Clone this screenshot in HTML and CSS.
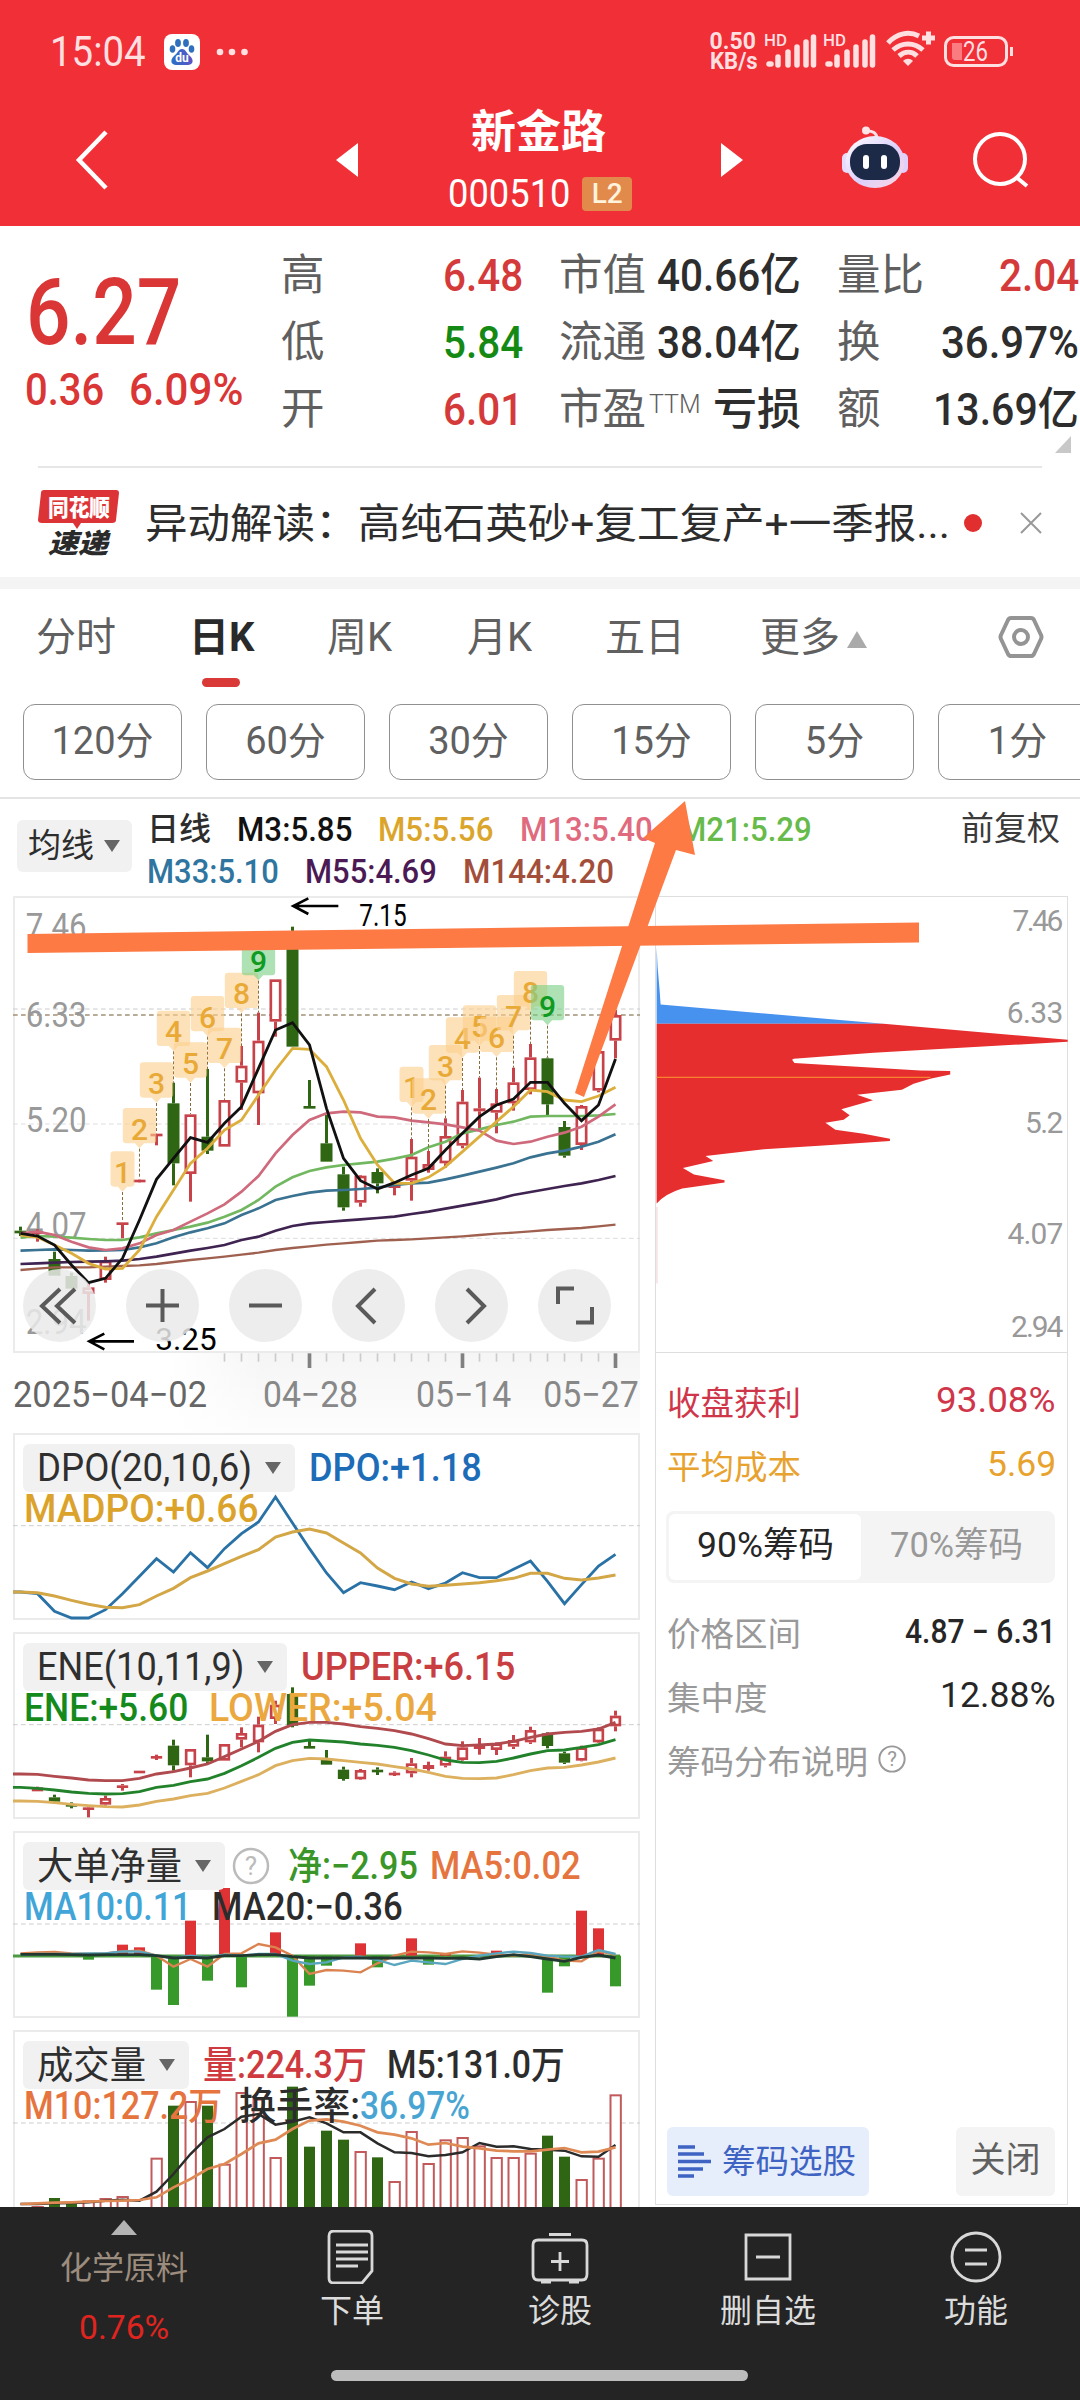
FILE: index.html
```html
<!DOCTYPE html>
<html lang="zh-CN">
<head>
<meta charset="utf-8">
<title>新金路 000510</title>
<link rel="stylesheet" href="styles.css">
</head>
<body>
<header class="top">
  <div class="status">
    <span class="fit clock" data-w="96">15:04</span>
    <svg class="baidu" width="36" height="36" viewBox="0 0 36 36"><defs><linearGradient id="paw" x1="0" x2="1"><stop offset="0" stop-color="#2b6fc4"/><stop offset="1" stop-color="#5a55c8"/></linearGradient></defs><rect width="36" height="36" rx="8" fill="#fff"/><g fill="#2f6fbe"><ellipse cx="8.500" cy="15" rx="2.800" ry="3.800"/><ellipse cx="14" cy="9" rx="2.900" ry="3.900"/><ellipse cx="22" cy="9" rx="2.900" ry="3.900"/><ellipse cx="27.500" cy="15" rx="2.800" ry="3.800"/></g><path d="M18 15c4 0 4 4 8 7 5 5 2 9-2 9H12c-4 0-7-4-2-9 4-3 4-7 8-7z" fill="url(#paw)"/><text x="18" y="28" text-anchor="middle" class="du">du</text></svg>
    <svg width="34" height="10" viewBox="0 0 34 10" fill="#ffdfe0"><circle cx="5" cy="5" r="3.300"/><circle cx="17" cy="5" r="3.300"/><circle cx="29.500" cy="5" r="3.300"/></svg>
    <div class="speed"><span class="fit" data-w="46">0.50</span><span class="fit" data-w="48">KB/s</span></div>
    <svg width="51" height="36" viewBox="0 0 51 36" class="signal"><text x="0" y="12" textLength="23" lengthAdjust="spacingAndGlyphs">HD</text><path d="M5 30h2M14 31v-8M24 31V18M33 31V13M42 31V8M49.500 31V3"/></svg>
    <svg width="51" height="36" viewBox="0 0 51 36" class="signal"><text x="0" y="12" textLength="23" lengthAdjust="spacingAndGlyphs">HD</text><path d="M5 30h2M14 31v-8M24 31V18M33 31V13M42 31V8M49.500 31V3"/></svg>
    <svg class="wifi" width="52" height="38" viewBox="0 0 52 38" fill="none" stroke="#ffdfe0" stroke-width="5"><path d="M3 13c9-10 21-12 31-7M8 20c9-8 21-8 30 0M14 26c6-5 13-5 18 0"/><path d="M18 31c3-3 7-3 10 0l-5 5z" fill="#ffdfe0" stroke="none"/><path d="M37 8h13M43.500 1.500v13"/></svg>
    <svg width="70" height="32" viewBox="0 0 70 32"><rect x="1.500" y="1.500" width="61" height="28" rx="8" fill="none" stroke="#ffdfe0" stroke-width="3"/><path d="M66 11h3v9h-3z" fill="#ffdfe0"/><path d="M8 7h10v17H11q-3 0-3-3z" fill="#fa7c80"/><text x="19" y="25" class="batt" textLength="25" lengthAdjust="spacingAndGlyphs">26</text></svg>
  </div>
  <nav class="titlebar">
    <svg class="back" width="36" height="64" viewBox="0 0 36 64"><path d="M33 4L6 32l27 28" fill="none" stroke="#fff" stroke-width="4.500"/></svg>
    <svg class="prev" width="24" height="36" viewBox="0 0 24 36"><path d="M23 1v34L1 18z" fill="#fff"/></svg>
    <div class="name"><h1>新金路</h1><div class="code"><span class="fit" data-w="123">000510</span><b>L2</b></div></div>
    <svg class="next" width="24" height="36" viewBox="0 0 24 36"><path d="M1 1v34l22-17z" fill="#fff"/></svg>
    <svg class="robot" width="68" height="64" viewBox="0 0 68 64"><defs><linearGradient id="bot" x1="0" y1="0" x2="1" y2="1"><stop offset="0" stop-color="#fff"/><stop offset=".55" stop-color="#dcd0fb"/><stop offset="1" stop-color="#ffd6e0"/></linearGradient></defs><path d="M24 5q12-1 12 8" fill="none" stroke="#ffdfe4" stroke-width="3"/><circle cx="25" cy="4.500" r="4" fill="#ffe4e8"/><rect x="1" y="27" width="10" height="20" rx="5" fill="#e6dcfb"/><rect x="57" y="27" width="10" height="20" rx="5" fill="#ddd0fb"/><ellipse cx="34" cy="36" rx="29.500" ry="26" fill="url(#bot)"/><rect x="9" y="18" width="50" height="36" rx="17" fill="#1c2947"/><rect x="22" y="29" width="6" height="14" rx="3" fill="#fff"/><rect x="40" y="29" width="6" height="14" rx="3" fill="#fff"/></svg>
    <svg class="find" width="58" height="58" viewBox="0 0 58 58" fill="none" stroke="#fff" stroke-width="4"><circle cx="28" cy="28" r="25"/><path d="M44 46l11 9"/></svg>
  </nav>
</header>

<section class="quote">
  <div class="price"><span class="fit last" data-w="155">6.27</span><div class="chg"><span class="fit" data-w="79">0.36</span><span class="fit" data-w="114">6.09%</span></div></div>
  <dl class="c1"><dt>高</dt><dd class="red"><span class="fit" data-w="80">6.48</span></dd><dt>低</dt><dd class="green"><span class="fit" data-w="80">5.84</span></dd><dt>开</dt><dd class="red"><span class="fit" data-w="80">6.01</span></dd></dl>
  <dl class="c2"><dt>市值</dt><dd><span class="fit" data-w="144">40.66亿</span></dd><dt>流通</dt><dd><span class="fit" data-w="144">38.04亿</span></dd><dt>市盈<sup>TTM</sup></dt><dd>亏损</dd></dl>
  <dl class="c3"><dt>量比</dt><dd class="red"><span class="fit" data-w="80">2.04</span></dd><dt>换</dt><dd><span class="fit" data-w="138">36.97%</span></dd><dt>额</dt><dd><span class="fit" data-w="146">13.69亿</span></dd></dl>
  <i class="corner"></i>
</section>

<section class="news">
  <svg width="82" height="70" viewBox="0 0 82 70"><path d="M6 2h72q3 0 3 3l-3 27q0 3-4 3H43l-4 6-4-6H4q-4 0-4-3L3 5q0-3 3-3z" fill="#dc3436"/><text x="10" y="28" class="lg1" textLength="62" lengthAdjust="spacingAndGlyphs">同花顺</text><text x="10" y="65" class="lg2" textLength="60" lengthAdjust="spacingAndGlyphs">速递</text></svg>
  <p><span class="fit" data-w="805">异动解读：高纯石英砂+复工复产+一季报...</span></p><i class="dot"></i>
  <svg class="close" width="24" height="24" viewBox="0 0 24 24"><path d="M2 2l20 20M22 2L2 22" stroke="#999" stroke-width="2"/></svg>
</section>

<nav class="tabs"><span>分时</span><span class="on">日K</span><span>周K</span><span>月K</span><span>五日</span><span>更多<i></i></span>
<svg width="46" height="46" viewBox="0 0 46 46" fill="none" stroke="#949494" stroke-width="4"><path d="M13 4h20q2 0 3 2l7 15q1 2 0 4l-7 15q-1 2-3 2H13q-2 0-3-2L3 25q-1-2 0-4l7-15q1-2 3-2z"/><circle cx="23" cy="23" r="7"/></svg></nav>
<div class="periods"><span>120分</span><span>60分</span><span>30分</span><span>15分</span><span>5分</span><span>1分</span></div>

<section class="legend">
  <span class="pill">均线<i class="tri"></i></span>
  <div class="ma">
    <p><span class="k">日线</span><span class="fit" data-w="115" style="color:#111">M3:5.85</span><span class="fit" data-w="115" style="color:#dba52c">M5:5.56</span><span class="fit" data-w="133" style="color:#e06a7e">M13:5.40</span><span class="fit" data-w="133" style="color:#66bb4a">M21:5.29</span></p>
    <p><span class="fit" data-w="132" style="color:#2f759f">M33:5.10</span><span class="fit" data-w="132" style="color:#4b1a55">M55:4.69</span><span class="fit" data-w="151" style="color:#a24e3b">M144:4.20</span></p>
  </div>
  <span class="adj">前复权</span>
</section>

<main class="board">
  <div class="left">
    <div class="kline">
      <svg id="kchart" width="627" height="457" viewBox="39 18 1881 1371"></svg>
      <div class="tools">
        <svg viewBox="0 0 73 73"><path d="M37 20L19 37l18 17M52 20L34 37l18 17"/></svg>
        <svg viewBox="0 0 73 73"><path d="M20 36.500h33M36.500 20v33"/></svg>
        <svg viewBox="0 0 73 73"><path d="M20 36.500h33"/></svg>
        <svg viewBox="0 0 73 73"><path d="M43 20L26 37l17 17"/></svg>
        <svg viewBox="0 0 73 73"><path d="M32 20l17 17-17 17"/></svg>
        <svg viewBox="0 0 73 73"><path d="M20 35V19.500h16M54 38v15.500H38"/></svg>
      </div>
    </div>
    <svg id="axis" class="axis" width="627" height="80" viewBox="39 1389 1881 240"></svg>
    <div class="panel"><svg id="dpo" width="627" height="187" viewBox="39 38 1881 561"></svg>
      <div class="cap"><p><span class="pill"><span class="fit" data-w="215">DPO(20,10,6)</span><i class="tri"></i></span><span class="fit" data-w="173" style="color:#1d6cb8">DPO:+1.18</span></p>
      <p class="r2"><span class="fit" data-w="234" style="color:#dba32b">MADPO:+0.66</span></p></div></div>
    <div class="panel"><svg id="ene" width="627" height="187" viewBox="39 634 1881 561"></svg>
      <div class="cap"><p><span class="pill"><span class="fit" data-w="207">ENE(10,11,9)</span><i class="tri"></i></span><span class="fit" data-w="214" style="color:#c93f41">UPPER:+6.15</span></p>
      <p class="r2"><span class="fit" data-w="164" style="color:#158a1c">ENE:+5.60</span><span class="fit gap21" data-w="228" style="color:#eba83f">LOWER:+5.04</span></p></div></div>
    <div class="panel"><svg id="net" width="627" height="187" viewBox="39 31 1881 561"></svg>
      <div class="cap"><p><span class="pill"><span class="fit" data-w="145">大单净量</span><i class="tri"></i></span><svg class="q big" width="38" height="38" viewBox="0 0 38 38"><circle cx="19" cy="19" r="17"/><text x="19" y="28">?</text></svg><span class="fit gapq" data-w="130" style="color:#3b962a">净:−2.95</span><span class="fit gap12" data-w="151" style="color:#e5743f">MA5:0.02</span></p>
      <p class="r2"><span class="fit" data-w="167" style="color:#41a5d8">MA10:0.11</span><span class="fit gap21" data-w="191" style="color:#2c2c2c">MA20:−0.36</span></p></div></div>
    <div class="panel"><svg id="vol" width="627" height="187" viewBox="39 628 1881 561"></svg>
      <div class="cap"><p><span class="pill"><span class="fit" data-w="109">成交量</span><i class="tri"></i></span><span class="fit" data-w="164" style="color:#cf3a40">量:224.3万</span><span class="fit gap20" data-w="178" style="color:#2c2c2c">M5:131.0万</span></p>
      <p class="r2"><span class="fit" data-w="198" style="color:#e5743f">M10:127.2万</span><span class="fit gap17" data-w="121" style="color:#2c2c2c">换手率:</span><span class="fit" data-w="110" style="color:#48a4d2">36.97%</span></p></div></div>
  </div>
  <aside class="chips">
    <svg class="dist" width="412" height="457" viewBox="47 16 1236 1370">
      <path d="M48 170L51 230 57 300 60 342 730 400H48z" fill="#4791ef"/>
      <path d="M48 400H730L1283 448V454L700 487 460 505 455 508 462 518 840 540 930 542V552L870 565 820 580 785 598 650 613 698 630 603 657 628 675 610 688 555 697 585 718 670 730 749 745V752L560 765 370 777 195 797 218 812 127 833 160 853 252 870V877L125 895Q75 910 48 940z" fill="#e72e2f"/>
      <path d="M48 561H870" stroke="#f5822e" stroke-width="4"/><path d="M49 950V1180" stroke="#f0b8c0" stroke-width="2"/>
      <g class="yr"><text x="1117" y="120" textLength="153">7.46</text><text x="1100" y="397" textLength="170">6.33</text><text x="1155" y="729" textLength="115">5.2</text><text x="1102" y="1061" textLength="168">4.07</text><text x="1113" y="1340" textLength="157">2.94</text></g>
    </svg>
    <div class="info">
      <p class="win"><span>收盘获利</span><span class="fit" data-w="120">93.08%</span></p>
      <p class="cost"><span>平均成本</span><span class="fit" data-w="69">5.69</span></p>
      <div class="seg"><b><span class="fit" data-w="137">90%筹码</span></b><span><span class="fit" data-w="133">70%筹码</span></span></div>
      <p><span>价格区间</span><span class="fit v sm" data-w="151">4.87 − 6.31</span></p>
      <p><span>集中度</span><span class="fit v" data-w="116">12.88%</span></p>
      <p class="note"><span>筹码分布说明</span><svg class="q" width="30" height="30" viewBox="0 0 38 38"><circle cx="19" cy="19" r="16"/><text x="19" y="28">?</text></svg></p>
    </div>
    <div class="acts"><span class="pick"><svg width="34" height="34" viewBox="0 0 34 34" stroke="#3f63c2" stroke-width="3.500"><path d="M0 2h17M0 9h26M0 16.500h33M0 24h25M0 31h16"/></svg>筹码选股</span><span class="shut">关闭</span></div>
  </aside>
  <svg class="marks" width="1080" height="320" viewBox="0 790 1080 320" fill="#fe7a45"><path d="M27.500 934L919 922.500V942.500L27.500 953z"/><path d="M575 1093L655 843 643 838 685 801 695 855 676 850 584 1097z"/></svg>
</main>

<footer class="bottom">
  <div class="items">
    <div class="sector"><i></i><span>化学原料</span><b><span class="fit" data-w="90">0.76%</span></b></div>
    <div><svg viewBox="0 0 54 54"><path d="M9 1h33q5 0 5 5v35l-10 12H9q-5 0-5-5V6q0-5 5-5zM11 15h32M11 22h32M11 29h32M11 36h22"/></svg><span>下单</span></div>
    <div><svg viewBox="0 0 60 54"><path d="M8 10h44q5 0 5 5v29q0 6-5 6H8q-5 0-5-6V15q0-5 5-5zM19 4.500h22M30 22v19M21 31.500h18M11 52h10M39 52h10"/></svg><span>诊股</span></div>
    <div><svg viewBox="0 0 54 54"><path d="M5 5h44v44H5zM15 27h24"/></svg><span>删自选</span></div>
    <div><svg viewBox="0 0 54 54"><circle cx="27" cy="27" r="24"/><path d="M16 20h22M16 34h22"/></svg><span>功能</span></div>
  </div>
  <i class="home"></i>
</footer>
<script src="charts.js"></script>
</body>
</html>
```
FILE: styles.css
```css
* { box-sizing: border-box; margin: 0; padding: 0; }
body { width: 1080px; height: 2400px; overflow: hidden; background: #fff; color: #2d2d2d; font-family: Roboto, "Noto Sans CJK SC", sans-serif; display: flex; flex-direction: column; position: relative; }
svg { display: block; flex: none; }
i { font-style: normal; display: block; flex: none; }
.fit { display: inline-block; white-space: pre; transform-origin: 0 50%; flex: none; }
.red { color: #d53a3b; }
.green { color: #148a14; }

.top { height: 226px; background: #f12f37; color: #fff; flex: none; }
.status { height: 103px; padding: 0 0 0 50px; display: flex; align-items: center; color: #ffdfe0; }
.clock { font-size: 42px; }
.baidu { margin: 0 15px 0 18px; }
.du { font: 700 12px Roboto; fill: #fff; }
.speed { display: flex; flex-direction: column; align-items: flex-start; font: 700 23px/20px Roboto; margin: 0 4px 0 461px; width: 50px; }
.signal { margin-right: 8px; overflow: visible; }
.signal text { font: 500 17px Roboto; fill: #ffdfe0; }
.signal path { stroke: #ffdfe0; stroke-width: 5.500; stroke-linecap: round; }
.wifi { margin: -6px 7px 0 3px; }
.batt { font: 27px Roboto; fill: #ffdfe0; }
.titlebar { height: 123px; display: flex; align-items: center; }
.titlebar > svg { margin-top: -10px; }
.back { margin-left: 73px; }
.prev { margin-left: 226px; }
.name { margin: -4px 99px 0 100px; width: 162px; display: flex; flex-direction: column; align-items: center; flex: none; }
.name h1 { font-size: 45px; line-height: 62px; font-weight: 700; margin-left: -3px; }
.code { display: flex; align-items: center; gap: 12px; font-size: 39px; line-height: 60px; }
.code b { width: 50px; height: 34px; border-radius: 4px; background: #e28a4c; color: #fff3dc; font: 500 28px/34px Roboto; text-align: center; }
.robot { margin-left: 97px; }
.titlebar > .robot { margin-top: -13px; }
.find { margin-left: 63px; }

.quote { height: 242px; display: flex; position: relative; flex: none; }
.quote::after { content: ""; position: absolute; left: 38px; right: 38px; bottom: 0; height: 2px; background: #e6e6e6; }
.price { width: 281px; padding: 34px 0 0 25px; color: #d93635; }
.last { font-size: 93px; line-height: 106px; font-weight: 500; margin-left: 1px; }
.chg { display: flex; gap: 25px; font-size: 45px; line-height: 48px; font-weight: 500; }
dl { display: grid; grid-template-columns: auto 1fr; grid-auto-rows: 67px; padding-top: 17px; line-height: 66px; font-size: 43.500px; align-content: start; }
dt { color: #5f5f5f; white-space: nowrap; }
dd { text-align: right; white-space: nowrap; font-weight: 500; font-size: 45px; }
.c2 dd:last-child { font-size: 44px; }
.c1 { width: 242px; }
.c2 { width: 242px; margin-left: 36px; grid-template-columns: 90px 152px; }
.c3 { width: 242px; margin-left: 36px; }
sup { font-size: 25px; line-height: 0; vertical-align: 11px; margin-left: 3px; font-weight: 300; }
.corner { position: absolute; left: 1055px; top: 210px; border-left: 16px solid transparent; border-bottom: 17px solid #c8c8c8; }

.news { height: 109px; display: flex; align-items: center; padding-left: 38px; flex: none; }
.news p { font-size: 41px; margin: -5px 0 0 25px; width: 806px; overflow: visible; white-space: nowrap; }
.lg1 { font: 900 23px "Noto Sans CJK SC"; fill: #fff; }
.lg2 { font: italic 900 27px "Noto Sans CJK SC"; fill: #2a2a2a; }
.dot { width: 18px; height: 18px; border-radius: 9px; background: #e02f2e; margin-left: 13px; }
.close { margin-left: 37px; }

.tabs { border-top: 12px solid #f4f4f4; height: 112px; display: grid; grid-template-columns: 153px 138px 140px 138px 155px 237px 1fr; padding-left: 36px; line-height: 98px; font-size: 40px; color: #606060; flex: none; }
.tabs .on { color: #2a2a2a; font-weight: 700; position: relative; }
.tabs .on::after { content: ""; position: absolute; left: 13px; bottom: 2px; width: 38px; height: 9px; border-radius: 5px; background: #d93a38; }
.tabs span { height: 100px; }
.tabs span i { display: inline-block; border: 10px solid transparent; border-top: 0; border-bottom: 17px solid #aaa; margin-left: 7px; vertical-align: 3px; }
.tabs svg { margin: 25px 0 0 1px; }
.periods { display: flex; gap: 24px; padding: 15px 0 0 23px; height: 110px; border-bottom: 2px solid #e4e4e4; overflow: hidden; flex: none; }
.periods span { flex: 0 0 159px; height: 76px; border: 1.500px solid #909090; border-radius: 12px; font-size: 38px; line-height: 72px; text-align: center; color: #606060; }

.legend { height: 97px; display: flex; padding: 9px 20px 0 17px; flex: none; color: #2d2d2d; }
.pill { background: #f1f1f1; border-radius: 6px; display: flex; align-items: center; flex: none; }
.tri { border: 8.500px solid transparent; border-bottom: 0; border-top: 12px solid #666; }
.legend .pill { width: 115px; height: 52px; margin-top: 12px; padding-left: 11px; font-size: 33px; line-height: 44px; }
.legend .tri { margin-left: 10px; }
.ma { margin-left: 15px; width: 700px; font-size: 34px; font-weight: 500; line-height: 42px; }
.ma p { display: flex; gap: 26px; }
.ma .k { width: 64px; font-size: 32px; }
.adj { margin-left: auto; font-size: 33px; line-height: 42px; white-space: nowrap; color: #3a3a3a; }

.board { position: relative; display: flex; height: 1311px; padding-left: 13px; flex: none; overflow: visible; }
.left { width: 627px; overflow: hidden; }
.kline { position: relative; height: 457px; border: 2px solid #ebebeb; }
.kline > svg { margin: -2px; }
.tools { position: absolute; left: 8px; bottom: 9px; display: flex; gap: 30px; }
.tools svg { width: 73px; height: 73px; border-radius: 50%; background: rgba(234,234,234,.85); fill: none; stroke: #5a5a5a; stroke-width: 4; }
.axis { background: linear-gradient(90deg, #fff 25%, rgba(255,255,255,0) 40%), linear-gradient(#f5f5f5, #fdfdfd); }
.axis text { font-size: 108px; fill: #666; }
.axis text + text { fill: #888; }
.panel { position: relative; height: 187px; margin-bottom: 12px; border: 2px solid #ebebeb; }
.panel > svg { margin: -2px; }
.cap { position: absolute; left: 8px; top: 9px; font-size: 38px; font-weight: 500; color: #2f2f2f; }
.cap p { display: flex; align-items: center; height: 48px; white-space: nowrap; line-height: 44px; }
.cap .r2 { height: 34px; margin-left: 1px; }
.cap .pill { height: 48px; padding: 0 14px; margin-right: 14px; font-weight: 400; }
.cap .tri { margin-left: 13px; }
.gap21 { margin-left: 21px; }
.gap20 { margin-left: 20px; }
.gap17 { margin-left: 17px; }
.gap12 { margin-left: 12px; }
.gapq { margin-left: 18px; }
.q circle { fill: none; stroke: #999; stroke-width: 2.500; }
.q text { font: 26px Roboto; fill: #999; text-anchor: middle; }
.q.big { margin-left: -7px; }
.q.big circle { stroke: #bbb; }
.q.big text { fill: #bbb; }

.kl text { font-size: 104px; fill: #999; }
.blk text { font-size: 94px; fill: #000; }
.tag text { font: 500 90px Roboto; text-anchor: middle; }

.chips { margin-left: 15px; width: 413px; height: 1309px; border: 1.500px solid #dedede; display: flex; flex-direction: column; }
.dist { border-bottom: 1.500px solid #dedede; margin: -1px 0 0 0; }
.yr text { font-size: 90px; fill: #999; }
.info { padding: 15px 11px 0; font-size: 33.500px; color: #999; }
.info p { display: flex; justify-content: space-between; align-items: center; height: 64px; }
.info .win { color: #d0364a; }
.info .cost { color: #e8a22e; }
.info .fit { font-size: 35px; }
.info .v { color: #262626; }
.info .sm { font-weight: 500; font-size: 33px; }
.seg { height: 72px; margin: 15px 0 16px -1px; width: 389px; background: #f4f4f4; border-radius: 8px; padding: 3px; display: flex; line-height: 64px; text-align: center; }
.seg b { width: 192px; background: #fff; border-radius: 6px; color: #262626; font-weight: 400; }
.seg > span { flex: 1; }
.info .note { justify-content: flex-start; gap: 9px; }
.acts { margin: auto 11px 8px; display: flex; justify-content: space-between; }
.pick { width: 202px; height: 69px; background: #e6eefc; border-radius: 6px; color: #3f63c2; font-size: 33.500px; line-height: 64px; display: flex; align-items: center; gap: 10px; padding-left: 11px; white-space: nowrap; }
.shut { width: 99px; height: 69px; background: #f4f4f4; border-radius: 6px; color: #606060; font-size: 35px; line-height: 67px; text-align: center; margin-right: 1px; }
.marks { position: absolute; left: 0; top: -106px; }

.bottom { position: relative; height: 193px; background: #242424; color: #dcdcdc; flex: none; }
.items { display: grid; grid-template-columns: 248px repeat(4, 208px); height: 163px; }
.items > div { display: flex; flex-direction: column; align-items: center; padding-top: 23px; font-size: 32px; line-height: 50px; }
.items svg { height: 54px; fill: none; stroke: #d8d8d8; stroke-width: 2.800; }
.items svg + span { margin-top: 2px; }
.items .sector { padding-top: 13px; color: #9c8c7d; }
.sector i { border: 13px solid transparent; border-top: 0; border-bottom: 15px solid #b4b4b4; }
.sector > span { margin-top: 8px; }
.sector b { font-weight: 400; font-size: 34px; color: #e0241f; margin-top: 9px; }
.home { width: 417px; height: 11px; border-radius: 6px; background: #bdbdbd; margin-left: 331px; }
```
FILE: charts.js
```js
// Chart units are thirds of a pixel; one trading day is 51 units wide.
var X = function (i) { return 61.5 + 51 * i; };
var RED = '#c8424a', GREEN = '#2f6614';
function rect(x, y, w, h, a) { return '<rect x="' + x + '" y="' + y + '" width="' + w + '" height="' + Math.max(h, 1) + '" ' + a + '/>'; }
function seg(x1, y1, x2, y2, a) { return '<path d="M' + x1 + ' ' + y1 + 'L' + x2 + ' ' + y2 + '" ' + a + '/>'; }
function line(ys, color, w, lead) {
  var d = lead ? 'M39 ' + ys[0] : '';
  ys.forEach(function (y, i) { d += (d ? 'L' : 'M') + X(i) + ' ' + y; });
  return '<path d="' + d + '" fill="none" stroke="' + color + '" stroke-width="' + w + '"/>';
}
function grid(y, color, w) { return seg(39, y, 1920, y, 'stroke="' + (color || '#ddd') + '" stroke-width="' + (w || 3) + '" stroke-dasharray="14 10"'); }
// rows: [direction, high, body top, body bottom, low]
function candles(rows, w) {
  return rows.map(function (c, i) {
    if (!c) return '';
    var up = c[0] > 0, x = X(i), col = up ? RED : GREEN, hollow = up && c[3] - c[2] > 14;
    var s = seg(x, c[1], x, c[2], 'stroke="' + col + '" stroke-width="9"') + seg(x, c[3], x, c[4], 'stroke="' + col + '" stroke-width="9"');
    return s + (hollow ? rect(x - w / 2 + 4, c[2] + 4, w - 8, c[3] - c[2] - 8, 'fill="#fff" stroke="' + col + '" stroke-width="8"')
      : rect(x - w / 2, c[2], w, Math.max(c[3] - c[2], 8), 'fill="' + col + '"'));
  }).join('');
}
function tag(i, n, top, low) {
  var x = X(i), h = n === 1 ? 36 : 50, g = n === 9;
  return '<g class="tag"><path d="M' + (x - h + 10) + ' ' + top + 'H' + (x + h - 10) + 'q10 0 10 10V' + (top + 96) + 'q0 10-10 10H' + (x + 14) + 'l-14 15l-14-15H' + (x - h + 10) + 'q-10 0-10-10V' + (top + 10) + 'q0-10 10-10z" fill="' + (g ? '#7ccf86' : '#fbcf8c') + '" opacity=".62"/>' +
    seg(x, top + 122, x, low, 'stroke="#8a6d3a" stroke-width="3" stroke-dasharray="9 6"') +
    '<text x="' + x + '" y="' + (top + 95) + '" fill="' + (g ? '#0f9a22' : '#e9a936') + '">' + n + '</text></g>';
}
function put(id, s) { document.getElementById(id).innerHTML = s; }
function txt(x, y, w, s) { return '<text x="' + x + '" y="' + y + '" textLength="' + w + '" lengthAdjust="spacingAndGlyphs">' + s + '</text>'; }

var k = [[-1,1010,1022,1028,1038],[1,1018,1024,1032,1055],[-1,1085,1107,1157,1157],[-1,1148,1158,1196,1196],[1,1180,1192,1212,1292],[1,1100,1112,1170,1178],[1,997,997,1003,1045],[1,868,869,877,878],[1,731,731,738,766],[-1,578,640,820,886],[1,673,673,852,935],[-1,537,740,782,792],[1,630,630,770,770],[1,468,527,578,660],[1,368,452,610,705],[1,268,268,395,440],[-1,110,150,470,470],[-1,570,648,655,655],[-1,675,760,815,815],[-1,830,853,952,962],[1,855,857,938,950],[-1,835,846,880,910],[1,880,884,894,916],[1,747,800,872,932],[1,783,822,840,848],[1,685,738,820,833],[1,600,635,767,775],[1,563,655,664,720],[1,597,640,668,730],[1,533,577,640,662],[1,462,502,600,613],[-1,503,505,643,675],[-1,693,711,797,803],[1,645,648,765,780],[1,480,483,602,607],[1,360,375,452,505]];
var m3 = [1030,1038,1065,1125,1178,1165,1105,990,868,805,743,757,700,650,535,420,398,465,655,805,872,897,878,855,835,780,730,680,645,627,577,577,640,692,645,507];
var m5 = [1035,1042,1065,1090,1120,1137,1135,1080,980,900,820,775,720,690,615,540,475,478,530,630,745,825,880,880,862,830,785,740,695,650,600,605,630,635,618,592];
var m13 = [1030,1025,1035,1055,1072,1080,1075,1060,1035,1020,995,970,943,905,858,790,735,690,670,665,667,680,682,692,697,703,712,722,752,762,755,740,728,710,680,643];
var m21 = [1043,1038,1040,1043,1047,1050,1050,1042,1030,1020,1010,998,980,960,930,890,862,843,832,825,820,815,806,795,772,755,730,718,705,695,680,678,678,678,676,672];
var m33 = [1082,1080,1078,1080,1082,1081,1080,1072,1060,1042,1027,1015,1000,975,955,930,918,908,902,900,897,893,885,880,878,868,857,845,833,820,802,790,782,770,755,733];
var m55 = [1122,1120,1118,1116,1115,1114,1112,1107,1100,1091,1082,1074,1065,1050,1040,1022,1008,1000,996,992,988,984,980,972,965,956,947,938,928,915,906,897,888,880,870,858];
var m144 = [1140,1136,1132,1132,1132,1130,1128,1126,1122,1116,1110,1105,1100,1094,1088,1080,1074,1069,1064,1060,1056,1052,1050,1048,1045,1042,1039,1035,1031,1028,1024,1020,1017,1014,1009,1004];
put('kchart', grid(357, '#ccc') + grid(375, '#a39076', 5) + grid(702) + grid(1045) +
  '<g class="kl">' + txt(77, 143, 183, '7.46') + txt(77, 410, 183, '6.33') + txt(77, 727, 183, '5.20') + txt(77, 1040, 183, '4.07') + txt(77, 1333, 183, '2.94') + '</g>' +
  candles(k, 36) + line(m144, '#a0604f', 7) + line(m55, '#3f2350', 8) + line(m33, '#3a7291', 8) + line(m21, '#72b860', 8) + line(m13, '#cf6a7c', 8) + line(m5, '#dcae3c', 8.5) + line(m3, '#111', 8.5) +
  [[6,1,784,995],[7,2,654,865],[8,3,517,730],[9,4,362,578],[10,5,457,672],[11,6,318,537],[12,7,413,630],[13,8,248,468],[14,9,150,368],[23,1,530,747],[24,2,565,783],[25,3,465,685],[26,4,382,600],[27,5,346,563],[28,6,380,597],[29,7,315,533],[30,8,243,462],[31,9,285,503]].map(function (t) { return tag.apply(null, t); }).join('') +
  '<g class="blk">' + txt(1078, 108, 142, '7.15') + txt(466, 1380, 184, '3.25') + '<path d="M1015 48H880M925 25L880 48L925 72M402 1354H268M313 1331L268 1354L313 1378" fill="none" stroke="#000" stroke-width="8"/></g>');

var ticks = '';
for (var i = 12; i < 36; i++) ticks += (i - 17) % 9 ? seg(X(i), 1390, X(i), 1415, 'stroke="#ccc" stroke-width="5"') : seg(X(i), 1390, X(i), 1434, 'stroke="#808080" stroke-width="11"');
put('axis', txt(39, 1550, 582, '2025−04−02') + txt(789, 1550, 285, '04−28') + txt(1248, 1550, 286, '05−14') + txt(1630, 1550, 286, '05−27') + ticks);

put('dpo', grid(316, '#ccc') +
  line([515,520,573,593,593,568,520,468,415,455,397,442,385,340,305,230,308,385,458,517,487,497,508,485,505,488,457,472,472,447,422,483,550,493,437,402], '#2a72a6', 8.5, true) +
  line([515,517,527,540,552,561,562,553,527,504,472,452,430,408,388,350,335,326,338,368,398,443,474,491,498,495,491,487,481,474,459,459,474,479,473,464], '#d3a646', 9, true));

put('ene', grid(912, '#ccc') + candles([null,[1,1098,1100,1112,1112],[-1,1122,1130,1143,1148],[-1,1145,1150,1157,1163],[1,1155,1160,1167,1190],[1,1125,1132,1152,1155],[1,1090,1094,1098,1110],[1,1050,1050,1055,1055],[1,1002,1006,1011,1018],[-1,957,975,1034,1050],[1,985,985,1034,1070],[-1,942,1010,1022,1030],[1,970,970,1020,1020],[1,920,937,957,980],[1,888,912,965,995],[1,840,852,895,910],[-1,800,820,915,920],[-1,960,976,983,983],[-1,988,1012,1032,1032],[-1,1038,1047,1075,1080],[1,1045,1048,1076,1078],[-1,1040,1047,1052,1063],[1,1052,1056,1061,1066],[1,1012,1028,1058,1070],[1,1023,1033,1045,1050],[1,992,1008,1035,1040],[1,962,980,1018,1020],[1,952,973,985,1002],[1,965,968,988,1003],[1,943,958,978,985],[1,918,928,965,970],[-1,935,938,976,983],[-1,993,998,1026,1030],[1,975,980,1020,1022],[1,920,924,965,967],[1,870,885,917,932]], 34) +
  line([1060,1061,1067,1072,1078,1080,1080,1073,1060,1053,1042,1030,1008,985,962,932,912,905,905,910,918,923,930,940,954,970,975,973,970,962,950,940,935,932,925,905], '#b04a4e', 8.5, true) +
  line([1100,1103,1108,1114,1118,1120,1119,1113,1100,1094,1083,1075,1058,1035,1010,983,965,958,961,964,970,974,980,990,1003,1018,1025,1026,1022,1012,1000,990,988,980,972,957], '#22822b', 8.5, true) +
  line([1141,1142,1146,1151,1155,1158,1159,1153,1142,1135,1125,1118,1102,1082,1062,1035,1020,1013,1015,1020,1025,1030,1038,1045,1055,1067,1073,1074,1072,1062,1050,1042,1040,1033,1024,1012], '#dcb05e', 8.5, true));

var net = { 4:417, 6:372, 7:380, 8:507, 9:553, 10:300, 11:480, 12:202, 13:500, 15:335, 16:588, 17:495, 18:435, 20:368, 21:440, 23:353, 24:432, 25:397, 28:390, 31:516, 32:437, 33:270, 34:323, 35:497 };
put('net', grid(310, '#ccc') + seg(39, 406, 1860, 406, 'stroke="#4d9a40" stroke-width="9"') + Object.keys(net).map(function (n) {
  var y = net[n]; return rect(X(+n) - 16.5, Math.min(y, 405), 33, Math.abs(y - 405), 'fill="' + (y < 405 ? '#de3234' : '#36992a') + '"');
}).join('') +
  line([398,395,394,398,400,398,392,390,405,438,415,438,400,398,370,380,405,460,448,450,455,428,405,393,395,400,392,396,402,405,400,408,420,422,392,402], '#da8350', 7) +
  line([402,400,400,400,398,398,392,393,405,412,405,410,402,405,400,400,420,430,425,410,408,418,433,420,425,430,415,405,398,393,397,405,408,408,388,400], '#5ba6bf', 7) +
  line([401,401,401,402,403,402,402,402,405,412,410,412,405,405,402,402,408,412,412,412,412,412,412,412,412,413,412,415,408,402,408,415,422,410,403,412], '#20382f', 8.5));

var vol = [null,1157,-1132,-1150,1140,1133,1127,1160,1012,-855,842,-855,1030,815,835,1010,-798,-978,-930,-957,992,-1010,1082,932,1028,957,950,975,1010,1010,997,-945,-1008,1076,1012,822];
put('vol', grid(907, '#ccc') + vol.map(function (v, n) {
  if (!v) return '';
  var y = Math.abs(v);
  return v < 0 ? rect(X(n) - 16.5, y, 33, 1200 - y, 'fill="' + GREEN + '"') : rect(X(n) - 15, y + 2, 31, 1200 - y, 'fill="#fff" stroke="#c25a5c" stroke-width="6"');
}).join('') +
  line([1150,1150,1148,1147,1145,1140,1137,1140,1113,1060,1000,950,925,888,880,912,903,890,908,935,935,968,995,997,1007,1003,995,967,978,977,985,987,990,1007,1008,973], '#2b2b2b', 7.5) +
  line([1150,1148,1146,1145,1143,1141,1140,1138,1130,1100,1075,1045,1030,1000,968,957,925,900,896,903,915,935,942,953,972,967,978,983,990,992,992,987,982,995,993,980], '#df8a54', 8));

document.querySelectorAll('.fit').forEach(function (e) {
  var w = e.offsetWidth, t = +e.dataset.w;
  e.style.transform = 'scaleX(' + t / w + ')';
  e.style.marginRight = (t - w) + 'px';
});
```
